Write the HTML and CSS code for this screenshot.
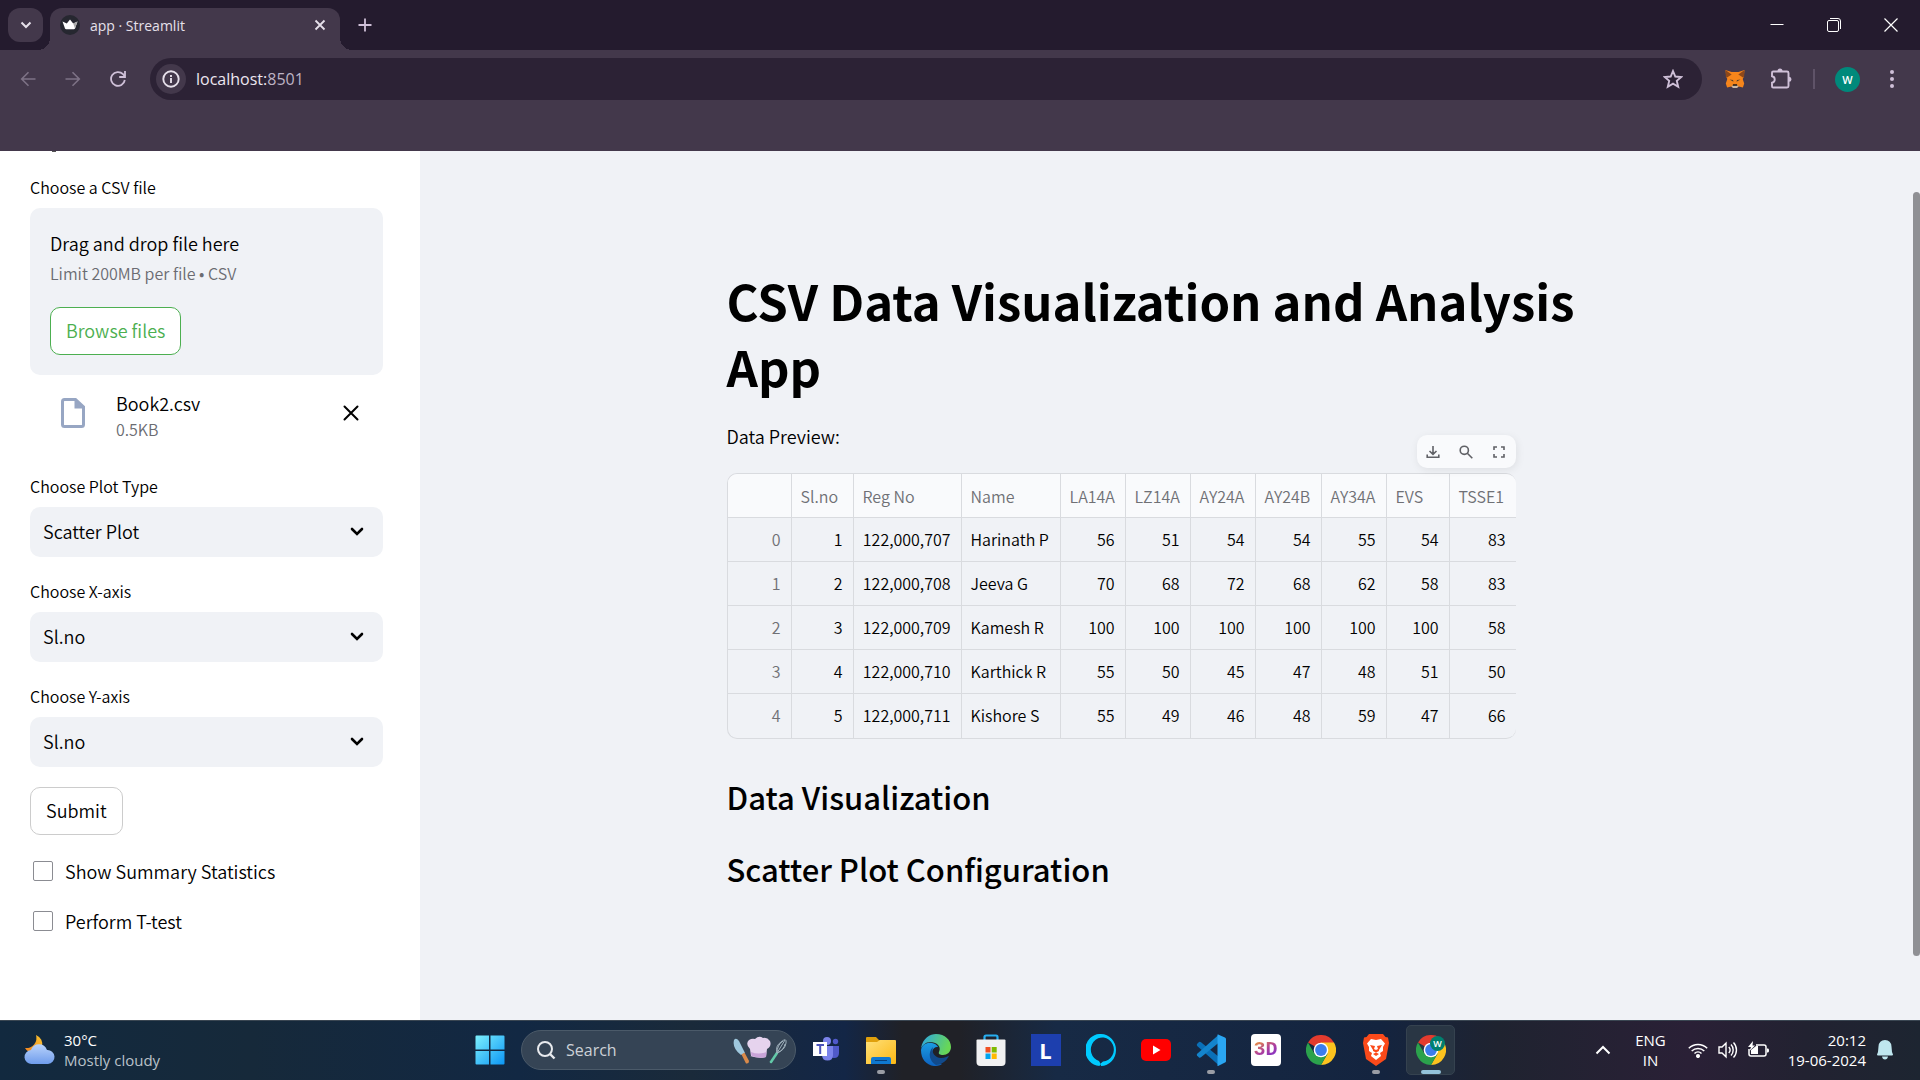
FILE: index.html
```html
<!DOCTYPE html>
<html lang="en">
<head>
<meta charset="utf-8">
<meta name="viewport" content="width=device-width, initial-scale=1">
<title>app · Streamlit</title>
<link rel="stylesheet" href="styles.css">
</head>
<body>
<header class="browser">
  <div class="tabstrip">
    <button class="tab-search" aria-label="Search tabs"><svg width="14" height="14" viewBox="0 0 14 14"><path d="M2.5 4.5 7 9l4.500-4.500" fill="none" stroke="currentColor" stroke-width="2"/></svg></button>
    <div class="tab">
      <svg width="20" height="20" viewBox="0 0 20 20"><circle cx="10" cy="10" r="10" fill="#262730"/><path d="M2.500 6.500 6.800 8.500 10 4.500l3.200 4 4.300-2-2.500 7q-.3.800-1.200.8H6.200q-.9 0-1.200-.8z" fill="#fff"/><path d="m13.200 8.500 4.300-2-2.500 7z" fill="#aaa"/></svg>
      <span class="tab-title">app · Streamlit</span>
      <button class="icon-btn tab-close" aria-label="Close tab"><svg width="12" height="12" viewBox="0 0 12 12"><path d="m1.500 1.500 9 9m0-9-9 9" stroke="currentColor" stroke-width="1.800"/></svg></button>
    </div>
    <button class="icon-btn new-tab" aria-label="New tab"><svg width="14" height="14" viewBox="0 0 14 14"><path d="M7 .5v13M.5 7h13" stroke="currentColor" stroke-width="1.800"/></svg></button>
    <div class="window-controls">
      <button class="icon-btn" aria-label="Minimize"><svg width="14" height="14" viewBox="0 0 14 14"><path d="M.5 6.500h13" stroke="currentColor"/></svg></button>
      <button class="icon-btn" aria-label="Restore"><svg width="14" height="14" viewBox="0 0 14 14" fill="none" stroke="currentColor"><rect x=".5" y="2.500" width="11" height="11" rx="1.500"/><path d="M3 .5h8a2.500 2.500 0 0 1 2.500 2.500v8"/></svg></button>
      <button class="icon-btn" aria-label="Close"><svg width="14" height="14" viewBox="0 0 14 14"><path d="m.5.5 13 13m0-13-13 13" stroke="currentColor" stroke-width="1.200"/></svg></button>
    </div>
  </div>
  <div class="toolbar">
    <div class="nav">
      <button class="icon-btn dim" aria-label="Back"><svg width="16" height="16" viewBox="0 0 16 16"><path d="M15.500 8H2m6.500-6.800L1.700 8l6.800 6.800" fill="none" stroke="currentColor" stroke-width="1.600"/></svg></button>
      <button class="icon-btn dim" aria-label="Forward"><svg width="16" height="16" viewBox="0 0 16 16"><path d="M.5 8H14M7.500 1.200 14.300 8l-6.800 6.800" fill="none" stroke="currentColor" stroke-width="1.600"/></svg></button>
      <button class="icon-btn" aria-label="Reload"><svg width="16" height="16" viewBox="0 0 16 16" fill="none" stroke="currentColor" stroke-width="1.800"><path d="M14.800 9A6.900 6.900 0 1 1 13 3.200L14.800 5.200"/><path d="M15 0v6H9.200"/></svg></button>
    </div>
    <div class="omnibox">
      <button class="site-info" aria-label="View site information"><svg width="18" height="18" viewBox="0 0 18 18"><circle cx="9" cy="9" r="7.700" fill="none" stroke="currentColor" stroke-width="1.900"/><path d="M9 8v5M9 5v2" stroke="currentColor" stroke-width="1.900"/></svg></button>
      <div class="url" role="textbox" aria-label="Address">localhost:<span>8501</span></div>
      <button class="icon-btn star" aria-label="Bookmark this tab"><svg width="20" height="20" viewBox="0 0 20 20"><path d="m10 2 2.300 5.500 6 .5-4.500 3.900 1.400 5.800L10 14.600l-5.200 3.100 1.400-5.800L1.700 8l6-.5z" fill="none" stroke="currentColor" stroke-width="1.900"/></svg></button>
    </div>
    <button class="icon-btn" aria-label="MetaMask"><svg width="20" height="20" viewBox="0 0 20 20"><path d="m.5 1 6 2h7l6-2-.8 7-1 2 1.500 4.500-1.300 4-4.200-1-1.700 1.300H8l-1.700-1.300-4.200 1-1.300-4L2.300 10l-1-2z" fill="#f6851b"/><path d="m.5 1 6.200 4.500L2 8.500.8 7.500zM19.500 1l-6.200 4.500L18 8.500l1.200-1z" fill="#8d481a"/><path d="m4.500 10.500 3.500.5.500 1.700zm11 0-3.500.5-.5 1.700z" fill="#54402c"/><path d="m6.300 17 2-.8h3.400l2 .8-1.700 1.900H8z" fill="#c9b8a8"/><path d="M8 15.300h4l.4 1.500H7.600z" fill="#161616"/></svg></button>
    <button class="icon-btn" aria-label="Extensions"><svg width="22" height="22" viewBox="0 0 22 22"><path d="M3.200 3.500H17a1.500 1.500 0 0 1 1.500 1.500V18a1.500 1.500 0 0 1-1.500 1.500H3.200Q2 19.500 2 18.200v-3.400a3.300 3.300 0 0 0 0-6.500V4.700Q2 3.500 3.200 3.500z" fill="none" stroke="currentColor" stroke-width="1.900"/><path d="M7.500 3a2.500 2.500 0 0 1 5 0zM19 8.800a2.500 2.500 0 0 1 0 5z" fill="currentColor"/></svg></button>
    <span class="divider"></span>
    <button class="avatar" aria-label="Profile">W</button>
    <button class="icon-btn menu" aria-label="Menu"><svg width="6" height="20" viewBox="0 0 6 20" fill="currentColor"><circle cx="3" cy="3" r="2"/><circle cx="3" cy="10" r="2"/><circle cx="3" cy="17" r="2"/></svg></button>
  </div>
  <div class="bookmarks"></div>
</header>

<div class="app">
  <aside class="sidebar">
    <div class="scrolled-heading"></div>
    <label class="label" for="browse">Choose a CSV file</label>
    <section class="dropzone">
      <div class="drop-title">Drag and drop file here</div>
      <div class="drop-limit">Limit 200MB per file • CSV</div>
      <button id="browse" class="btn btn-green">Browse files</button>
    </section>
    <div class="file">
      <div class="file-icon"><svg width="24" height="30" viewBox="0 0 24 30"><path d="M3.500 1.500h11L22.500 9v17.500q0 2-2 2h-17q-2 0-2-2v-23q0-2 2-2z" fill="none" stroke="#97a6c3" stroke-width="3"/><path d="M13.500 1v9.500H23z" fill="#97a6c3"/></svg></div>
      <div class="file-info"><div class="file-name">Book2.csv</div><div class="file-size">0.5KB</div></div>
      <button class="icon-btn file-remove" aria-label="Remove file"><svg width="16" height="16" viewBox="0 0 16 16"><path d="m1.500 1.500 13 13m0-13-13 13" stroke="currentColor" stroke-width="2" stroke-linecap="round"/></svg></button>
    </div>
    <div class="field">
      <label class="label" for="plot">Choose Plot Type</label>
      <div class="select"><select id="plot"><option>Scatter Plot</option></select><svg width="14" height="10" viewBox="0 0 14 10"><path d="m2 2 5 5 5-5" fill="none" stroke="#000" stroke-width="2.600" stroke-linecap="round"/></svg></div>
    </div>
    <div class="field">
      <label class="label" for="xaxis">Choose X-axis</label>
      <div class="select"><select id="xaxis"><option>Sl.no</option></select><svg width="14" height="10" viewBox="0 0 14 10"><path d="m2 2 5 5 5-5" fill="none" stroke="#000" stroke-width="2.600" stroke-linecap="round"/></svg></div>
    </div>
    <div class="field">
      <label class="label" for="yaxis">Choose Y-axis</label>
      <div class="select"><select id="yaxis"><option>Sl.no</option></select><svg width="14" height="10" viewBox="0 0 14 10"><path d="m2 2 5 5 5-5" fill="none" stroke="#000" stroke-width="2.600" stroke-linecap="round"/></svg></div>
    </div>
    <button class="btn">Submit</button>
    <div class="checks">
      <label class="check"><input type="checkbox">Show Summary Statistics</label>
      <label class="check"><input type="checkbox">Perform T-test</label>
    </div>
  </aside>

  <main class="main">
    <div class="content">
      <h1>CSV Data Visualization and Analysis App</h1>
      <p class="preview">Data Preview:</p>
      <div class="frame">
        <div class="frame-tools">
          <button class="icon-btn" aria-label="Download"><svg width="14" height="14" viewBox="0 0 14 14" fill="none" stroke="currentColor" stroke-width="1.600"><path d="M7 1v8M3.500 6 7 9.300 10.500 6M1.200 9.500v2.700h11.600V9.500"/></svg></button>
          <button class="icon-btn" aria-label="Search"><svg width="14" height="14" viewBox="0 0 14 14" fill="none" stroke="currentColor" stroke-width="1.600"><circle cx="5.300" cy="5.300" r="4.100"/><path d="m8.300 8.300 5 5"/></svg></button>
          <button class="icon-btn" aria-label="Fullscreen"><svg width="12" height="12" viewBox="0 0 12 12" fill="none" stroke="currentColor" stroke-width="1.600"><path d="M1 4V1h3m4 0h3v3m0 4v3H8m-4 0H1V8"/></svg></button>
        </div>
        <div class="grid-wrap">
        <table class="grid">
          <colgroup><col class="c-idx"><col class="c-sl"><col class="c-reg"><col class="c-name"><col class="c-mark"><col class="c-mark"><col class="c-mark"><col class="c-wide"><col class="c-mark"><col class="c-evs"><col class="c-wide"></colgroup>
          <thead><tr><th></th><th>Sl.no</th><th>Reg No</th><th>Name</th><th>LA14A</th><th>LZ14A</th><th>AY24A</th><th>AY24B</th><th>AY34A</th><th>EVS</th><th>TSSE1</th></tr></thead>
          <tbody>
            <tr><th>0</th><td>1</td><td>122,000,707</td><td class="text">Harinath P</td><td>56</td><td>51</td><td>54</td><td>54</td><td>55</td><td>54</td><td>83</td></tr>
            <tr><th>1</th><td>2</td><td>122,000,708</td><td class="text">Jeeva G</td><td>70</td><td>68</td><td>72</td><td>68</td><td>62</td><td>58</td><td>83</td></tr>
            <tr><th>2</th><td>3</td><td>122,000,709</td><td class="text">Kamesh R</td><td>100</td><td>100</td><td>100</td><td>100</td><td>100</td><td>100</td><td>58</td></tr>
            <tr><th>3</th><td>4</td><td>122,000,710</td><td class="text">Karthick R</td><td>55</td><td>50</td><td>45</td><td>47</td><td>48</td><td>51</td><td>50</td></tr>
            <tr><th>4</th><td>5</td><td>122,000,711</td><td class="text">Kishore S</td><td>55</td><td>49</td><td>46</td><td>48</td><td>59</td><td>47</td><td>66</td></tr>
          </tbody>
        </table>
        </div>
      </div>
      <h2>Data Visualization</h2>
      <h2>Scatter Plot Configuration</h2>
    </div>
    <div class="scrollbar"></div>
  </main>
</div>

<footer class="taskbar">
  <div class="weather">
    <svg width="32" height="32" viewBox="0 0 32 32"><defs><linearGradient id="cl" x1="0" y1="0" x2="0" y2="1"><stop offset="0" stop-color="#b9d3fb"/><stop offset="1" stop-color="#6f9cec"/></linearGradient><linearGradient id="mo" x1="1" y1="0" x2="0" y2="1"><stop offset="0" stop-color="#fbc62f"/><stop offset="1" stop-color="#f08020"/></linearGradient></defs><path d="M12 1a10 10 0 0 1-11 13 9.500 9.500 0 0 0 17-1A10 10 0 0 0 12 1z" fill="url(#mo)"/><path d="M8 30a7 7 0 0 1-1-14 8.500 8.500 0 0 1 16 0 7 7 0 0 1 1 14z" fill="url(#cl)"/></svg>
    <div class="weather-text"><div>30°C</div><div class="muted">Mostly cloudy</div></div>
  </div>
  <div class="apps">
    <button class="task" aria-label="Start"><svg width="30" height="30" viewBox="0 0 30 30"><defs><linearGradient id="wi" x1="0" y1="0" x2="1" y2="1"><stop offset="0" stop-color="#7df0fd"/><stop offset="1" stop-color="#0c96f5"/></linearGradient></defs><path d="M1.500.5H14v14H.5V1.500q0-1 1-1zM15.500.5h13q1 0 1 1v13h-14zM.5 16H14v13.500H1.500q-1 0-1-1zM15.500 16h14v12.500q0 1-1 1h-13z" fill="url(#wi)"/></svg></button>
    <label class="search"><svg width="20" height="20" viewBox="0 0 20 20"><circle cx="9" cy="9" r="7" fill="none" stroke="#e8eaee" stroke-width="2"/><path d="m14 14 4.500 4.500" stroke="#e8eaee" stroke-width="2.400"/></svg><input type="text" placeholder="Search" aria-label="Search">
      <svg class="chef" width="54" height="28" viewBox="0 0 54 28"><path d="M1 4q2-3 5 1l6 12-4 2Q-1 12 1 4z" fill="#9fc8de"/><path d="m8.500 18.500 3-2L16 25q0 3-3 2.500z" fill="#d98a4a"/><path d="M18 20 17 13Q12 8 16 4q3-2 6-1 4-4 8-1 4-1 7 3 2 5-3 8l-1 8q-7 2-16-1z" fill="#e6d3ee"/><path d="m18 16 .5 4q8 3 14.500 1l.5-5q-8 3-15.500 0z" fill="#c9a4d8"/><path d="m38 26 6-9" stroke="#63c9a8" stroke-width="2.500" stroke-linecap="round"/><path d="M44 17q-2-7 4-11 6-5 5 1-1 7-9 10zm0 0 8-13m-8 13q0-8 6-12m-6 12q7-3 8-9" fill="none" stroke="#9fb0bb"/></svg>
    </label>
    <button class="task" aria-label="Teams"><svg width="30" height="30" viewBox="0 0 30 30"><circle cx="16" cy="6" r="4" fill="#7b83eb"/><circle cx="24.500" cy="6.500" r="2.700" fill="#5059c9"/><path d="M19 11h9v7q0 5-5 5-4 0-4-5z" fill="#5059c9"/><path d="M11 11h11v9q0 5.500-5.500 5.500T11 20z" fill="#7b83eb"/><rect x="2" y="7" width="14" height="14" fill="#fff"/><path d="M5.500 10h7.500M9.200 10v9" stroke="#4b53bc" stroke-width="2"/></svg></button>
    <button class="task open" aria-label="File Explorer"><svg width="32" height="30" viewBox="0 0 32 30"><defs><linearGradient id="fo" x1="0" y1="0" x2="1" y2="1"><stop offset="0" stop-color="#ffe07a"/><stop offset="1" stop-color="#fcb813"/></linearGradient></defs><path d="M1 9V3q0-1 1-1h9l3 3h16v6H1z" fill="#e0a00c"/><path d="M1 7h11l3-2h15q1 0 1 1v22q0 1-1 1H1z" fill="url(#fo)"/><path d="M6 29v-5q0-2 2-2h16q2 0 2 2v5z" fill="#0f78d0"/><path d="M10 25.500h12" stroke="#07407c"/></svg></button>
    <button class="task" aria-label="Edge"><svg width="30" height="32" viewBox="0 0 30 32"><defs><linearGradient id="ed" x1="0" y1="0" x2="1" y2=".3"><stop offset="0" stop-color="#2aa5e8"/><stop offset="1" stop-color="#68d756"/></linearGradient><linearGradient id="eb" x1="0" y1="0" x2="0" y2="1"><stop offset="0" stop-color="#1b9de2"/><stop offset="1" stop-color="#0d62c0"/></linearGradient></defs><path d="M0 14C2 4 9 0 15 0c9 0 15 6 15 13 0 5-4 8-8 8-3 0-5-1-4-3 3-6-3-10-9-10-4 0-7 3-9 6z" fill="url(#ed)"/><path d="M0 16C1 10 7 8 11 9c5 1 6 4 6 4-5-1-7 5-5 9 2 5 6 8 9 8-3 2-6 2-8 2C5 31 0 25 0 16z" fill="url(#eb)"/><path d="M12 13c-2 5 2 11 8 11 4 0 7-2 8-2-3 6-9 9-13 9-6-3-9-12-3-18z" fill="#114a8b"/></svg></button>
    <button class="task" aria-label="Microsoft Store"><svg width="30" height="32" viewBox="0 0 30 32"><path d="M8.500 6V3q0-1.500 1.500-1.500h10q1.500 0 1.500 1.500v3" fill="none" stroke="#27aef0" stroke-width="2.200"/><path d="M.5 6.500q0-1 1-1h27q1 0 1 1V28q0 4-4 4h-21q-4 0-4-4z" fill="#f1f1f2"/><path d="M9.500 13h5v5.500h-5z" fill="#f05022"/><path d="M15.700 13h5v5.500h-5z" fill="#7fba00"/><path d="M9.500 19.500h5V25h-5z" fill="#02a4ef"/><path d="M15.700 19.500h5V25h-5z" fill="#ffb900"/></svg></button>
    <button class="task" aria-label="L"><span class="tile-l">L</span></button>
    <button class="task" aria-label="Alexa"><svg width="30" height="32" viewBox="0 0 30 32"><path fill-rule="evenodd" d="M15 0a15 16 0 0 1 0 32q-1-4-2-5A11.500 12 0 1 1 17 27.500Q14 29 13.500 32A15 16 0 0 1 15 0z" fill="#00caff"/></svg></button>
    <button class="task" aria-label="YouTube"><svg width="30" height="22" viewBox="0 0 30 22"><rect width="30" height="22" rx="5" fill="#f00"/><path d="m12 6.500 7.500 4.500-7.500 4.500z" fill="#fff"/></svg></button>
    <button class="task open" aria-label="Visual Studio Code"><svg width="30" height="32" viewBox="0 0 30 32"><path d="M1 10 3 8q1-.5 2 .2L23 23v8.500L1.200 12q-.8-1-.2-2z" fill="#0a70b8"/><path d="m1 21.500 2 2q1 .5 2-.2L23 8.500V.5L1.200 19.700q-.8.800-.2 1.800z" fill="#1484cc"/><path d="M22 .5 29 3.500q1 .5 1 1.500v22q0 1-1 1.500L22 32q-1 0-.5-1.500v-29Q21 .5 22 .5z" fill="#2aa6f2"/></svg></button>
    <button class="task" aria-label="3D"><span class="tile-3d"><span>3D</span></span></button>
    <button class="task" aria-label="Chrome"><svg width="30" height="30" viewBox="0 0 30 30"><path d="M15 15 2 7.500a15 15 0 0 1 26 0z" fill="#e33b2e"/><path d="M28 7.500H15l6.500 11.200L15 30A15 15 0 0 0 28 7.500z" fill="#fcc31e"/><path d="M2 7.500A15 15 0 0 0 15 30l6.500-11.300L15 15 8.500 18.700z" fill="#2ba24c"/><circle cx="15" cy="15" r="7.300" fill="#fff"/><circle cx="15" cy="15" r="5.900" fill="#3b7ded"/></svg></button>
    <button class="task open" aria-label="Brave"><svg width="26" height="32" viewBox="0 0 26 32"><path d="M6 0h14l2.500 3 2.500.5L26 9l-3 16-10 7L3 25 0 9l1-5.500L3.500 3z" fill="#fb4a1a"/><path d="m8 5 5 1 5-1 4 4.500-2 3.500v4l-3 2 1 3-5 4-5-4 1-3-3-2v-4l-2-3.500z" fill="#fff"/><path d="m7 11 5 1-1 3 2 1 2-1-1-3 5-1-3 5v1l-3 1.500L10 17v-1zm3 9 3-1.500 3 1.500-3 2z" fill="#fb4a1a"/></svg></button>
    <button class="task open active" aria-label="Chrome, profile W"><svg width="30" height="30" viewBox="0 0 30 30"><path d="M15 15 2 7.500a15 15 0 0 1 26 0z" fill="#e33b2e"/><path d="M28 7.500H15l6.500 11.200L15 30A15 15 0 0 0 28 7.500z" fill="#fcc31e"/><path d="M2 7.500A15 15 0 0 0 15 30l6.500-11.300L15 15 8.500 18.700z" fill="#2ba24c"/><circle cx="15" cy="15" r="7.300" fill="#fff"/><circle cx="15" cy="15" r="5.900" fill="#3b7ded"/></svg><span class="badge">W</span></button>
  </div>
  <div class="tray">
    <button class="icon-btn" aria-label="Show hidden icons"><svg width="16" height="10" viewBox="0 0 16 10"><path d="m1.500 8.500 6.500-6.500 6.500 6.500" fill="none" stroke="currentColor" stroke-width="2"/></svg></button>
    <div class="lang"><div>ENG</div><div>IN</div></div>
    <div class="status">
      <svg width="20" height="16" viewBox="0 0 20 16" fill="none" stroke="#fff" stroke-width="1.500"><path d="M.8 6.200a13 13 0 0 1 18.400 0M3.700 9a9 9 0 0 1 12.600 0M6.500 11.500a5 5 0 0 1 7 0"/><circle cx="10" cy="14" r="1.300" fill="#fff"/></svg>
      <svg width="20" height="18" viewBox="0 0 20 18" fill="none" stroke="#fff" stroke-width="1.400"><path d="M1 6h3l4-3.800v13.600L4 12H1zM10.800 6a4.500 4.500 0 0 1 0 6M13 3.500a8 8 0 0 1 0 11M15.500 1.500a11 11 0 0 1 0 15"/></svg>
      <svg width="21" height="18" viewBox="0 0 21 18"><path d="M8 4h8q2 0 2 2v7q0 2-2 2H3q-2 0-2-2V8" fill="none" stroke="#fff" stroke-width="1.500"/><path d="M19 7.500h1q1 0 1 2t-1 2h-1zM3 13V9l5-4h2v8z" fill="#fff"/><path d="M5 0 0 6h3L1.500 10 7 4.500H4.500z" fill="#fff"/></svg>
    </div>
    <div class="clock"><div>20:12</div><div>19-06-2024</div></div>
    <button class="icon-btn bell" aria-label="Notifications"><svg width="16" height="20" viewBox="0 0 16 20" fill="#bfe6ef"><path d="M8 0q6 0 6.500 6.500L15 12l1 2.500q0 1-1 1H1q-1 0-1-1L1 12l.5-5.500Q2 0 8 0zM5 16.500h6q-.5 3-3 3t-3-3z"/></svg></button>
  </div>
</footer>
</body>
</html>
```
FILE: styles.css
```css
* { box-sizing: border-box; }

body {
  margin: 0;
  min-height: 100vh;
  display: flex;
  flex-direction: column;
  font-family: "Noto Sans CJK JP", "Noto Sans", sans-serif;
  font-size: 18px;
  font-weight: 350;
  color: #000;
  background: #f0f2f6;
}

button, input, select { font: inherit; color: inherit; }
svg { display: block; flex: none; }

.icon-btn {
  display: flex;
  align-items: center;
  justify-content: center;
  padding: 0;
  border: 0;
  background: none;
}

/* Browser chrome */
.browser {
  background: #43384b;
  color: #e6e0ea;
  font-family: "Open Sans", "Noto Sans", sans-serif;
  font-size: 14px;
  font-weight: 400;
}
.tabstrip {
  display: flex;
  height: 50px;
  padding: 8px 1px 0 8px;
  background: #241b2e;
}
.tab-search {
  display: flex;
  align-items: center;
  justify-content: center;
  width: 35px;
  height: 34px;
  padding: 0;
  border: 0;
  border-radius: 12px;
  background: #43384b;
}
.tab {
  position: relative;
  display: flex;
  align-items: center;
  width: 290px;
  height: 42px;
  margin-left: 7px;
  padding: 0 14px 8px 10px;
  border-radius: 12px 12px 0 0;
  background: #43384b;
}
.tab::before, .tab::after {
  content: "";
  position: absolute;
  bottom: 0;
  width: 12px;
  height: 12px;
}
.tab::before { right: 100%; background: radial-gradient(circle at 0 0, transparent 12px, #43384b 12px); }
.tab::after { left: 100%; background: radial-gradient(circle at 100% 0, transparent 12px, #43384b 12px); }
.tab-title { margin-left: 10px; }
.tab-close { margin-left: auto; }
.new-tab { width: 50px; height: 34px; color: #cfc0d8; }
.window-controls { display: flex; margin-left: auto; height: 34px; color: #fff; }
.window-controls .icon-btn { width: 57px; }

.toolbar {
  display: flex;
  align-items: center;
  height: 58px;
  padding: 0 8px 0 8px;
  color: #cfc0d8;
}
.nav { display: flex; }
.nav .icon-btn { width: 40px; height: 42px; margin-right: 5px; }
.nav .dim { color: #7d7286; }
.omnibox {
  display: flex;
  align-items: center;
  flex: 1;
  height: 42px;
  margin: 0 10px 0 7px;
  padding: 0 19px 0 6px;
  border-radius: 21px;
  background: #2c2235;
}
.site-info {
  display: flex;
  align-items: center;
  justify-content: center;
  width: 30px;
  height: 30px;
  padding: 0;
  border: 0;
  border-radius: 50%;
  background: #43384b;
  color: #e6e0ea;
}
.url { flex: 1; margin-left: 10px; font-size: 16px; color: #ece6f0; }
.url span { color: #bdb3c4; }
.toolbar > .icon-btn { width: 46px; height: 40px; }
.divider { width: 2px; height: 20px; margin: 0 20px 0 9px; background: #5f5368; }
.avatar {
  width: 25px;
  height: 25px;
  padding: 0;
  border: 0;
  border-radius: 50%;
  background: #00897b;
  color: #fff;
  font-size: 11px;
  font-weight: 600;
}
.toolbar > .menu { width: 40px; margin-left: 12px; margin-right: 0; }
.bookmarks { height: 43px; }

/* App */
.app { display: flex; flex: 1; }
.sidebar {
  width: 420px;
  flex: none;
  padding: 0 37px 40px 30px;
  background: #fff;
}
.scrolled-heading { width: 4px; height: 1px; margin: 0 0 24px 22px; background: #555; }
.label { display: block; margin-bottom: 10px; font-size: 16px; line-height: 22px; }

.dropzone { padding: 20px; border-radius: 10px; background: #f0f2f6; }
.drop-title { line-height: 30px; }
.drop-limit { font-size: 16px; line-height: 30px; color: #6b6c72; }
.btn {
  height: 48px;
  padding: 0 15px 2px;
  border: 1px solid #ccc;
  border-radius: 10px;
  background: #fff;
  line-height: 30px;
}
.btn-green { margin-top: 19px; border-color: #4caf50; color: #4caf50; display: block; }

.file { display: flex; padding: 15px 24px 0 31px; }
.file-icon, .file-remove { display: flex; align-items: center; height: 46px; }
.file-info { flex: 1; margin-left: 31px; line-height: 26px; }
.file-size { font-size: 16px; color: #6b6c72; }

.field { margin-top: 23px; }
.file + .field { margin-top: 33px; }
.select { display: flex; align-items: center; height: 50px; padding-right: 19px; border-radius: 10px; background: #f0f2f6; }
.select select {
  flex: 1;
  height: 50px;
  padding: 0 13px 2px;
  border: 0;
  background: none;
  appearance: none;
}
.field + .btn { margin-top: 20px; }
.checks { display: flex; flex-direction: column; gap: 20px; margin-top: 21px; }
.check { display: flex; align-items: center; line-height: 30px; }
.check input {
  appearance: none;
  width: 20px;
  height: 20px;
  margin: 0 12px 0 3px;
  border: 1px solid #8b8c92;
  border-radius: 2px;
  background: #fff;
}

.main { position: relative; flex: 1; padding: 116px 7px 40px 0; }
.content { max-width: 880px; margin: 0 auto; }
.scrollbar {
  position: absolute;
  top: 41px;
  right: 0;
  bottom: 64px;
  width: 7px;
  border-radius: 4px;
  background: #8f9094;
}
h1 { margin: 0; font-size: 49px; font-weight: 700; line-height: 66px; }
h2 { margin: 0 0 30px; font-size: 31px; font-weight: 500; line-height: 42px; }
.preview { margin: 22px 0; line-height: 30px; }

.frame { position: relative; width: 789px; margin-bottom: 37px; }
.frame-tools {
  position: absolute;
  top: -38px;
  right: 0;
  display: flex;
  height: 33px;
  border-radius: 10px;
  background: #f9fafc;
  box-shadow: 1px 2px 8px rgba(0, 0, 0, 0.08);
  color: #606166;
}
.frame-tools .icon-btn { width: 33px; }
.grid-wrap {
  overflow: hidden;
  border: 1px solid #d9dbdf;
  border-right: 0;
  border-radius: 10px;
}
.grid {
  width: 100%;
  border-collapse: separate;
  border-spacing: 0;
  table-layout: fixed;
  font-size: 16px;
}
.c-idx { width: 64px; }
.c-sl { width: 62px; }
.c-reg { width: 108px; }
.c-name { width: 99px; }
.c-mark { width: 65px; }
.c-wide { width: 66px; }
.c-evs { width: 63px; }
.grid th, .grid td {
  height: 44px;
  padding: 0 10px 2px 9px;
  border-right: 1px solid #d9dbdf;
  border-bottom: 1px solid #d9dbdf;
  line-height: 24px;
  text-align: right;
  white-space: nowrap;
}
.grid th { font-weight: inherit; color: #6f7075; }
.grid thead th { padding: 0 0 0 9px; text-align: left; background: #f9fafc; }
.grid .text { text-align: left; padding-right: 0; }
.grid tr > :last-child { border-right: 0; }
.grid tbody tr:last-child > * { border-bottom: 0; }

/* Taskbar */
.taskbar {
  display: grid;
  grid-template-columns: 1fr auto 1fr;
  align-items: center;
  height: 60px;
  padding-bottom: 2px;
  border-top: 1px solid #3a4652;
  background: linear-gradient(90deg, #12293f 0, #16293a 13%, #122843 27%, #1a2a3a 36%, #132646 44%, #202127 47%, #202127 50%, #172a45 55%, #14243f 72%, #1f2330 78%, #2a2036 88%, #222231 94%, #1d2531 100%);
  color: #fff;
  font-family: "Open Sans", "Noto Sans", sans-serif;
  font-size: 15px;
  font-weight: 400;
  line-height: 20px;
}
.weather { display: flex; align-items: center; gap: 8px; padding-left: 24px; }
.muted { color: #b9c1c9; }
.apps { display: flex; align-items: center; }
.task {
  position: relative;
  display: flex;
  align-items: center;
  justify-content: center;
  width: 49px;
  height: 50px;
  margin: 0 3px;
  padding: 0;
  border: 1px solid transparent;
  border-radius: 5px;
  background: none;
}
.task.open::after {
  content: "";
  position: absolute;
  bottom: 0;
  width: 8px;
  height: 4px;
  border-radius: 2px;
  background: #9a9da5;
}
.task.active { border-color: #35424f; background: #293644; }
.task.active::after { width: 20px; background: #93c2da; }
.badge {
  position: absolute;
  top: 10px;
  right: 9px;
  width: 15px;
  height: 15px;
  border-radius: 50%;
  background: #00806f;
  color: #fff;
  font-size: 9px;
  font-weight: 600;
  line-height: 15px;
}
.tile-l, .tile-3d { width: 30px; height: 32px; line-height: 32px; font-weight: 700; }
.tile-l { background: #1d3fae; color: #fff; font-size: 22px; }
.tile-3d {
  border-radius: 4px;
  background: #fff;
  font-family: "Liberation Mono", monospace;
  font-size: 20px;
}
.tile-3d span {
  background: linear-gradient(150deg, #e8903f 15%, #b0409a 50%, #7a2fd0 85%);
  background-clip: text;
  color: transparent;
}
.search {
  display: flex;
  align-items: center;
  width: 275px;
  height: 40px;
  margin: 0 2px 0 4px;
  padding: 0 8px 0 14px;
  border: 1px solid #4b5a69;
  border-radius: 20px;
  background: #354455;
}
.search input {
  flex: 1;
  min-width: 0;
  margin-left: 10px;
  padding: 0;
  border: 0;
  background: none;
  font-size: 16px;
}
.search input::placeholder { color: #ccd1d7; opacity: 1; }
.tray { display: flex; align-items: center; justify-content: flex-end; padding-right: 27px; }
.lang { margin: 0 22px 0 24px; text-align: center; }
.status { display: flex; align-items: center; gap: 10px; }
.clock { margin-left: 19px; text-align: right; }
.bell { margin-left: 11px; }
```
